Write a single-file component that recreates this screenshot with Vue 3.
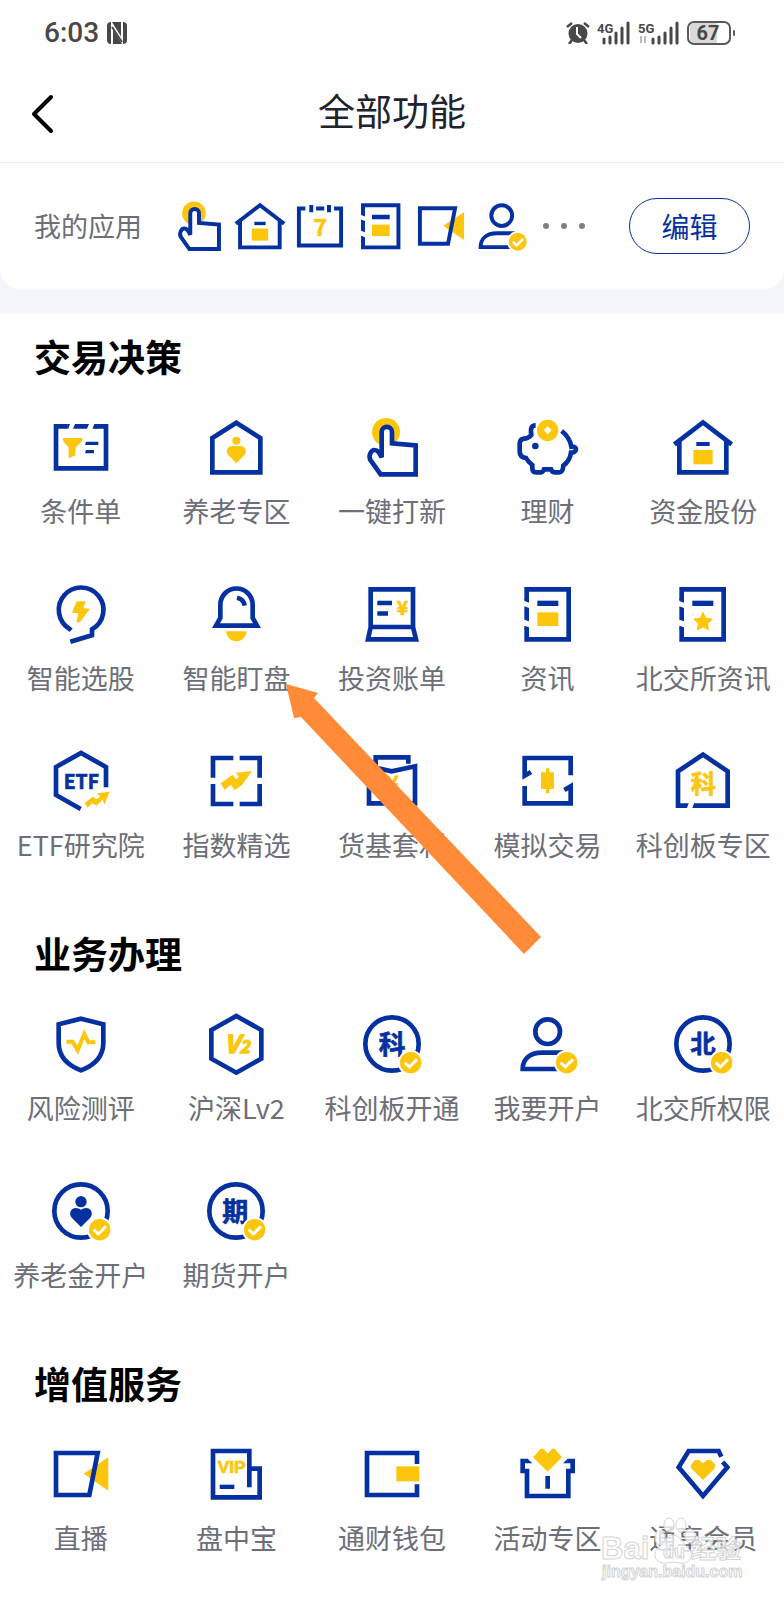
<script setup>
const yen = (x, y, size) => ({ text: '¥', x, y, size, tone: 'ty' })

const icons = {
  calendar: { glyphs: [{ text: '7', x: 97, y: 133, size: 84, tone: 'ty' }] },
  bill: { glyphs: [yen(127, 99, 58)] },
  etf: { glyphs: [{ text: 'ETF', x: 97, y: 119, size: 58, tone: 'tb' }] },
  fund: { glyphs: [yen(97, 130, 66)] },
  'star-board': { glyphs: [{ text: '科', x: 97, y: 131, size: 76, tone: 'ty' }] },
  level2: {
    glyphs: [
      { text: 'V', x: 84, y: 123, size: 74, tone: 'ty it' },
      { text: '2', x: 122, y: 123, size: 52, tone: 'ty it' },
    ],
  },
  'star-open': { shape: 'ring', badge: true, glyphs: [{ text: '科', x: 96, y: 126, size: 80, tone: 'tb' }] },
  'bse-open': { shape: 'ring', badge: true, glyphs: [{ text: '北', x: 96, y: 124, size: 76, tone: 'tb' }] },
  'futures-open': { shape: 'ring', badge: true, glyphs: [{ text: '期', x: 94, y: 125, size: 78, tone: 'tb' }] },
  'pension-open': { badge: true },
  person: { badge: true },
  vip: { glyphs: [{ text: 'VIP', x: 83, y: 92, size: 52, tone: 'ty latin' }] },
}
const shapeOf = (name) => '#i-' + (icons[name]?.shape ?? name)
const glyphsOf = (name) => icons[name]?.glyphs ?? []
const hasBadge = (name) => Boolean(icons[name]?.badge)

const myApps = [
  { icon: 'hand', label: '一键打新' },
  { icon: 'house', label: '资金股份' },
  { icon: 'calendar', label: '日历' },
  { icon: 'news', label: '资讯' },
  { icon: 'live', label: '直播' },
  { icon: 'person', label: '我要开户' },
]

const sections = [
  {
    title: '交易决策',
    pointer: true,
    items: [
      { icon: 'condition', label: '条件单' },
      { icon: 'pension', label: '养老专区' },
      { icon: 'hand', label: '一键打新' },
      { icon: 'piggy', label: '理财' },
      { icon: 'house', label: '资金股份' },
      { icon: 'pick', label: '智能选股' },
      { icon: 'bell', label: '智能盯盘' },
      { icon: 'bill', label: '投资账单' },
      { icon: 'news', label: '资讯' },
      { icon: 'bse-news', label: '北交所资讯' },
      { icon: 'etf', label: 'ETF研究院' },
      { icon: 'index', label: '指数精选' },
      { icon: 'fund', label: '货基套利' },
      { icon: 'simulate', label: '模拟交易' },
      { icon: 'star-board', label: '科创板专区' },
    ],
  },
  {
    title: '业务办理',
    items: [
      { icon: 'shield', label: '风险测评' },
      { icon: 'level2', label: '沪深Lv2' },
      { icon: 'star-open', label: '科创板开通' },
      { icon: 'person', label: '我要开户' },
      { icon: 'bse-open', label: '北交所权限' },
      { icon: 'pension-open', label: '养老金开户' },
      { icon: 'futures-open', label: '期货开户' },
    ],
  },
  {
    title: '增值服务',
    watermark: true,
    items: [
      { icon: 'live', label: '直播' },
      { icon: 'vip', label: '盘中宝' },
      { icon: 'wallet', label: '通财钱包' },
      { icon: 'gift', label: '活动专区' },
      { icon: 'diamond', label: '通享会员' },
    ],
  },
]
</script>

<template>
  <svg class="sprite" aria-hidden="true">
    <symbol id="i-check" viewBox="0 0 80 80">
      <circle cx="40" cy="40" r="38" fill="#fff" />
      <circle class="y" cx="40" cy="40" r="32" />
      <path d="M22 40 L36 53 L59 30" fill="none" stroke="#fff" stroke-width="9" />
    </symbol>
    <symbol id="i-ring" viewBox="0 0 192 192">
      <circle class="l" cx="96" cy="96" r="80" />
    </symbol>
    <symbol id="i-condition" viewBox="0 0 192 192">
      <path class="l" d="M56 34 H21 V160 H171 V34 H138" />
      <path class="b" d="M55 27 H63 L58 41 H55Z M78 27 H120 L114 41 H72Z M136 27 H144 V41 H130Z" />
      <path class="y" d="M42 69 H100 V77 L79 98 V121 L59 130 V98 L42 77Z" />
      <path class="b" d="M111 80 H148 V90 H108Z M111 105 H135 V115 H108Z" />
    </symbol>
    <symbol id="i-pension" viewBox="0 0 192 192">
      <path class="l" d="M25 69 L97 23 L169 69 V172 H25Z" />
      <circle class="y" cx="97" cy="77" r="12" />
      <path class="y" d="M97 145 L73 120 C62 108 72 92 86 93 H108 C122 92 132 108 121 120Z" />
    </symbol>
    <symbol id="i-hand" viewBox="0 0 192 192">
      <circle class="y" cx="78" cy="51" r="42" />
      <path class="l solid" d="M65 127 V51 A15.500 15.500 0 0 1 96 51 V85 L167 91 V178 H62 L32 136 C24 124 32 105 44 105 C54 105 58 114 65 127Z" />
    </symbol>
    <symbol id="i-piggy" viewBox="0 0 192 192">
      <path class="l" d="M59 31 C46 31 43 40 46 60 C40 67 32 71 24 71 C14 72 11 78 11 88 V108 C11 122 18 128 30 129 C36 140 44 146 49 150 V160 C49 168 53 172 60 172 H74 C80 172 82 168 84 163 H105 C107 169 109 172 115 172 H130 C138 172 141 166 142 152 C155 142 163 128 165 113 C172 113 180 110 180 103 C180 96 173 94 166 95 C163 75 152 60 137 48" />
      <circle class="b" cx="58" cy="93" r="10" />
      <circle class="y" cx="95" cy="46" r="32" />
      <path fill="#fff" d="M95 34 L107 46 L95 58 L83 46Z" />
    </symbol>
    <symbol id="i-house" viewBox="0 0 192 192">
      <path class="l" d="M10 88 L96 22 L182 88 M25 80 V172 H166 V80" />
      <path class="b" d="M76 81 H116 V93 H76Z" />
      <path class="y" d="M67 105 H125 V148 H67Z" />
    </symbol>
    <symbol id="i-calendar" viewBox="0 0 192 192">
      <path class="l" d="M44 34 H21 V165 H171 V34 H146 M82 34 H111" />
      <path class="l" d="M65 21 V47 M128 21 V47" />
    </symbol>
    <symbol id="i-news" viewBox="0 0 192 192">
      <path class="l" d="M32 54 V22 H158 V172 H32 V138" />
      <path class="b" d="M25 50 H39 V62 L25 57Z M25 73 L39 78 V118 L25 113Z M25 131 L39 136 V142 H25Z" />
      <path class="b" d="M64 56 H127 V72 H64Z" />
      <path class="y" d="M64 91 H127 V132 H64Z" />
    </symbol>
    <symbol id="i-bse-news" viewBox="0 0 192 192">
      <path class="l" d="M32 54 V22 H158 V172 H32 V138" />
      <path class="b" d="M25 50 H39 V62 L25 57Z M25 73 L39 78 V118 L25 113Z M25 131 L39 136 V142 H25Z" />
      <path class="b" d="M64 56 H127 V72 H64Z" />
      <path class="y" d="M96 88 L105 107 L126 110 L111 125 L115 146 L96 136 L77 146 L81 125 L66 110 L87 107Z" />
    </symbol>
    <symbol id="i-pick" viewBox="0 0 192 192">
      <path class="l" d="M66 145 L62 141 A67 67 0 1 1 129 142 V160 L64 179" />
      <path class="y" d="M83 58 H110 L103 79 L123 80 L93 121 H82 L88 94 L69 92Z" />
    </symbol>
    <symbol id="i-bell" viewBox="0 0 192 192">
      <path class="l" d="M49 108 V68 A48.500 48.500 0 0 1 146 68 V108 L159 131 H36Z" />
      <path class="l" d="M99 47 Q119 51 122 71" />
      <path class="y" d="M66 148 H128 C126 166 114 178 97 178 C80 178 68 166 66 148Z" />
    </symbol>
    <symbol id="i-bill" viewBox="0 0 192 192">
      <path class="l" d="M32 135 V22 H159 V135Z L24 172 H168 L159 135" />
      <path class="b" d="M52 56 H96 V70 H52Z M52 88 H84 V101 H52Z" />
    </symbol>
    <symbol id="i-etf" viewBox="0 0 192 192">
      <path class="l" d="M171 115 V54 L96 12 L21 54 V138 L95 180" />
      <path class="y" d="M107 162 L131 143 L142 151 L153 143 L144 133 L182 128 L166 167 L161 152 L143 170 L130 163 L116 176Z" />
    </symbol>
    <symbol id="i-index" viewBox="0 0 192 192">
      <path class="l" d="M88 27 H27 V86 M107 27 H167 V86 M27 105 V165 H88 M167 105 V165 H107" />
      <path class="y" d="M50 103 L86 77 L96 91 L105 84 L96 71 L144 66 L114 108 L92 124 L81 107 L62 123Z" />
    </symbol>
    <symbol id="i-fund" viewBox="0 0 192 192">
      <path class="l" d="M47 55 V25 H145 V44" />
      <path class="l" d="M27 52 L95 67 L165 52 V163 H27Z" />
    </symbol>
    <symbol id="i-simulate" viewBox="0 0 192 192">
      <path class="l" d="M164 79 V27 H26 V80 L45 69 M26 111 V163 H164 V112 L145 123" />
      <path class="y" d="M75 70 H90 V58 H100 V70 H114 V120 H100 V133 H90 V120 H75Z" />
    </symbol>
    <symbol id="i-star-board" viewBox="0 0 192 192">
      <path class="l" d="M46 170 H21 V67 L96 17 L170 67 V170 H70" />
      <path class="b" d="M45 163 H53 L48 177 H45Z M69 163 H72 V177 H64Z" />
    </symbol>
    <symbol id="i-shield" viewBox="0 0 192 192">
      <path class="l" d="M96 20 L163 37 V92 C163 135 135 160 96 175 C57 160 29 135 29 92 V37Z" />
      <path d="M52 89 H71 L86 115 L106 66 L118 91 H139" fill="none" stroke="#fcc60c" stroke-width="12" />
    </symbol>
    <symbol id="i-level2" viewBox="0 0 192 192">
      <path class="l" d="M97 12 L172 54 V140 L97 182 L22 140 V54Z" />
    </symbol>
    <symbol id="i-pension-open" viewBox="0 0 192 192">
      <circle class="l" cx="96" cy="96" r="80" />
      <circle class="b" cx="96" cy="68" r="17" />
      <path class="b" d="M96 144 L69 117 C56 102 68 87 80 87 Q90 87 96 92 Q102 87 112 87 C124 87 136 102 123 117Z" />
    </symbol>
    <symbol id="i-person" viewBox="0 0 192 192">
      <circle class="l" cx="95" cy="59" r="37" />
      <path class="l" d="M142 122 H78 C40 122 20 142 20 171 H130" />
    </symbol>
    <symbol id="i-live" viewBox="0 0 192 192">
      <path class="y" d="M104 95 L178 46 V146Z" />
      <path class="l" d="M21 33 H146 L121 159 H21Z" />
    </symbol>
    <symbol id="i-vip" viewBox="0 0 192 192">
      <path class="l" d="M136 136 V27 H27 V166 H167 V80 H140" />
      <path class="b" d="M47 128 H91 V141 H47Z" />
    </symbol>
    <symbol id="i-wallet" viewBox="0 0 192 192">
      <path class="l" d="M171 66 V33 H21 V159 H171 V127" />
      <path class="y" d="M109 73 H178 V118 H109Z" />
    </symbol>
    <symbol id="i-gift" viewBox="0 0 192 192">
      <path class="l" d="M36 57 H20 V87 H33 V162 H157 V87 H170 V57 H154" />
      <path class="b" d="M35 50 L49 64 H35Z M155 50 L141 64 H155Z M88 102 H102 V140 H88Z" />
      <path class="y" d="M51 46 L74 20 H82 L95 35 L108 20 H116 L138 46 L95 89Z" />
    </symbol>
    <symbol id="i-diamond" viewBox="0 0 192 192">
      <path class="l" d="M151 44 L143 27 H53 L23 76 L96 162 L169 76 L155 60" />
      <path class="y" d="M96 114 L62 80 Q56 73 62 66 L72 54 H84 L96 64 L108 54 H120 L131 66 Q136 73 130 80Z" />
    </symbol>
  </svg>

  <main class="page">
    <div class="status">
      <div class="status-side">
        <span class="clock">6:03</span>
        <svg class="nfc" viewBox="0 0 20 22" aria-label="NFC">
          <rect width="20" height="22" rx="4" fill="#484848" />
          <path d="M5 22 V2 L15 18 M15 0 V20 L5 4" fill="none" stroke="#fff" stroke-width="2" />
          <path d="M5 5 L15 20" stroke="#484848" stroke-width="2" />
        </svg>
      </div>
      <div class="status-side">
        <svg class="alarm" viewBox="0 0 24 22" aria-label="闹钟">
          <ellipse cx="12" cy="11.500" rx="9.500" ry="9.500" fill="#484848" />
          <path d="M1 5 L6 1 M23 5 L18 1 M6 18 L3 22 M18 18 L21 22" stroke="#484848" stroke-width="2.500" />
          <path d="M11 5 V12 L15 16" fill="none" stroke="#fff" stroke-width="2" />
        </svg>
        <svg class="signal" viewBox="0 0 34 24" aria-label="4G">
          <text class="net" x="0" y="12">4G</text>
          <path d="M7 18 V22 M13 16 V22 M19 12 V22 M25 7 V22 M31 2 V22" stroke="#484848" stroke-width="3" stroke-linecap="round" />
        </svg>
        <svg class="signal second" viewBox="0 0 42 24" aria-label="5G">
          <text class="net" x="0" y="12">5G</text>
          <path d="M3 15 V22 M7 15 V22" stroke="#bbb" stroke-width="2" />
          <path d="M15 18 V22 M21 16 V22 M27 12 V22 M33 7 V22 M39 2 V22" stroke="#484848" stroke-width="3" stroke-linecap="round" />
        </svg>
        <svg class="battery" viewBox="0 0 50 24" aria-label="电量">
          <path d="M8 2 H30 V22 H8 Q3 22 3 17 V7 Q3 2 8 2Z" fill="#d9d9d9" />
          <rect x="1" y="1" width="42" height="22" rx="6" fill="none" stroke="#5a5a5a" stroke-width="2" />
          <path d="M47 10 V14" stroke="#5a5a5a" stroke-width="2" stroke-linecap="round" />
          <text class="level" x="21" y="19">67</text>
        </svg>
      </div>
    </div>

    <header class="bar">
      <button class="back" type="button" aria-label="返回">
        <svg viewBox="0 0 24 40"><path d="M20 3 L3 20 L20 37" fill="none" stroke="#000" stroke-width="4" stroke-linecap="round" stroke-linejoin="round" /></svg>
      </button>
      <h1>全部功能</h1>
    </header>

    <div class="band">
      <div class="mine">
        <span class="mine-label">我的应用</span>
        <div class="mine-icons">
          <svg v-for="app in myApps" :key="app.icon" viewBox="0 0 192 192" :aria-label="app.label">
            <use :href="shapeOf(app.icon)" />
            <text v-for="g in glyphsOf(app.icon)" :key="g.text" :x="g.x" :y="g.y" :font-size="g.size" :class="g.tone">{{ g.text }}</text>
            <use v-if="hasBadge(app.icon)" href="#i-check" x="112" y="112" width="80" height="80" />
          </svg>
        </div>
        <div class="dots"><i></i><i></i><i></i></div>
        <button class="edit" type="button">编辑</button>
      </div>
    </div>

    <section v-for="s in sections" :key="s.title">
      <h2>{{ s.title }}</h2>
      <div class="grid">
        <a v-for="it in s.items" :key="it.label" href="#" class="item">
          <svg viewBox="0 0 192 192" aria-hidden="true">
            <use :href="shapeOf(it.icon)" />
            <text v-for="g in glyphsOf(it.icon)" :key="g.text" :x="g.x" :y="g.y" :font-size="g.size" :class="g.tone">{{ g.text }}</text>
            <use v-if="hasBadge(it.icon)" href="#i-check" x="112" y="112" width="80" height="80" />
          </svg>
          <span>{{ it.label }}</span>
        </a>
      </div>
      <svg v-if="s.pointer" class="pointer" viewBox="0 0 256 270" aria-hidden="true">
        <path d="M0 0 L32 9 L28 14 L255 253 L238 270 L15 33 L8 34Z" fill="#ff8b38" />
      </svg>
      <div v-if="s.watermark" class="watermark" aria-hidden="true">
        <svg viewBox="0 0 142 66">
          <g fill="#fff" fill-opacity=".75" stroke="#d4d4d4" stroke-width="1">
            <ellipse cx="59" cy="22" rx="5" ry="7" />
            <ellipse cx="68" cy="9" rx="5" ry="7" />
            <ellipse cx="80" cy="9" rx="5" ry="7" />
            <ellipse cx="89" cy="20" rx="5" ry="7" />
            <path d="M72 19 C80 19 82 28 88 33 C94 40 88 49 79 47 Q72 45 65 47 C54 48 51 38 57 32 C64 27 64 19 72 19Z" />
            <text x="0" y="43" font-size="31" class="wm">Bai</text>
            <text x="62" y="42" font-size="18" class="wm">du</text>
            <text x="90" y="42" font-size="25" class="wm cn">经验</text>
            <text x="1" y="61" font-size="16" class="wm">jingyan.baidu.com</text>
          </g>
        </svg>
      </div>
    </section>
  </main>
</template>

<style>
body {
  background: #fefefe;
}
</style>

<style scoped>
.sprite {
  position: absolute;
  width: 0;
  height: 0;
}
.l {
  fill: none;
  stroke: #0531a0;
  stroke-width: 14;
}
.solid {
  fill: #fff;
}
.b {
  fill: #0531a0;
}
.y {
  fill: #fcc60c;
}
.ty,
.tb {
  font-family: "Noto Sans CJK SC", sans-serif;
  font-weight: 700;
  text-anchor: middle;
  fill: #fcc60c;
  stroke: #fcc60c;
  stroke-width: 2;
}
.tb {
  fill: #0531a0;
  stroke: #0531a0;
}
.it {
  font-style: italic;
  stroke-width: 4;
}
.latin {
  font-family: "Liberation Sans", sans-serif;
}
.page {
  font-family: "Noto Sans CJK SC", sans-serif;
  color: #6c6e78;
  overflow: hidden;
}
.status {
  display: flex;
  justify-content: space-between;
  align-items: center;
  height: 66px;
  padding: 0 47px 0 44px;
}
.status-side {
  display: flex;
  align-items: center;
}
.clock {
  font: 500 28px/32px Roboto, sans-serif;
  color: #484848;
}
.nfc {
  width: 20px;
  height: 22px;
  margin-left: 8px;
}
.alarm {
  width: 24px;
  height: 22px;
}
.signal {
  width: 34px;
  height: 24px;
  margin-left: 7px;
}
.second {
  width: 42px;
}
.battery {
  width: 50px;
  height: 24px;
  margin-left: 7px;
}
.net {
  font: 700 13px Roboto, sans-serif;
  fill: #484848;
}
.level {
  font: 700 20px Roboto, sans-serif;
  text-anchor: middle;
  fill: #484848;
}
.bar {
  position: relative;
  display: flex;
  align-items: center;
  justify-content: center;
  height: 97px;
  border-bottom: 1px solid #ececee;
  box-sizing: border-box;
}
.back {
  position: absolute;
  left: 31px;
  top: 28px;
  width: 24px;
  height: 40px;
  padding: 0;
  border: 0;
  background: none;
}
.back svg {
  display: block;
  width: 24px;
  height: 40px;
}
h1 {
  margin: 0 0 8px;
  font-size: 37px;
  line-height: 48px;
  font-weight: 400;
  color: #20222e;
}
.band {
  background: #f3f5fa;
  padding-bottom: 24px;
}
.mine {
  display: flex;
  align-items: center;
  height: 126px;
  padding: 0 34px;
  background: #fefefe;
  border-radius: 0 0 20px 20px;
}
.mine-label {
  font-size: 27px;
  line-height: 36px;
}
.mine-icons {
  display: flex;
  justify-content: space-between;
  width: 357px;
  margin-left: 30px;
}
.mine-icons svg {
  width: 54px;
  height: 54px;
}
.dots {
  display: flex;
  gap: 12px;
  margin-left: 14px;
}
.dots i {
  width: 6px;
  height: 6px;
  border-radius: 50%;
  background: #808080;
}
.edit {
  width: 121px;
  height: 56px;
  margin-left: auto;
  padding: 0;
  border: 1px solid #0531a0;
  border-radius: 28px;
  background: none;
  font: 400 28px/40px "Noto Sans CJK SC", sans-serif;
  color: #0531a0;
}
section {
  position: relative;
  padding: 19px 3px 47px;
}
h2 {
  margin: 0 0 35px 31px;
  font-size: 37px;
  line-height: 48px;
  font-weight: 700;
  color: #000;
}
.grid {
  display: grid;
  grid-template-columns: repeat(5, 1fr);
  row-gap: 53px;
}
.item {
  display: flex;
  flex-direction: column;
  align-items: center;
  gap: 14px;
  color: inherit;
  text-decoration: none;
}
.item svg {
  width: 64px;
  height: 64px;
}
.item span {
  font-size: 27px;
  line-height: 36px;
  white-space: nowrap;
}
.pointer {
  position: absolute;
  left: 286px;
  top: 371px;
  width: 256px;
  height: 270px;
}
.watermark {
  position: absolute;
  right: 41px;
  top: 176px;
  width: 142px;
  height: 66px;
}
.watermark svg {
  display: block;
  width: 142px;
  height: 66px;
}
.wm {
  font-family: "Liberation Sans", sans-serif;
  font-weight: 700;
}
.cn {
  font-family: "Noto Sans CJK SC", sans-serif;
}
</style>
